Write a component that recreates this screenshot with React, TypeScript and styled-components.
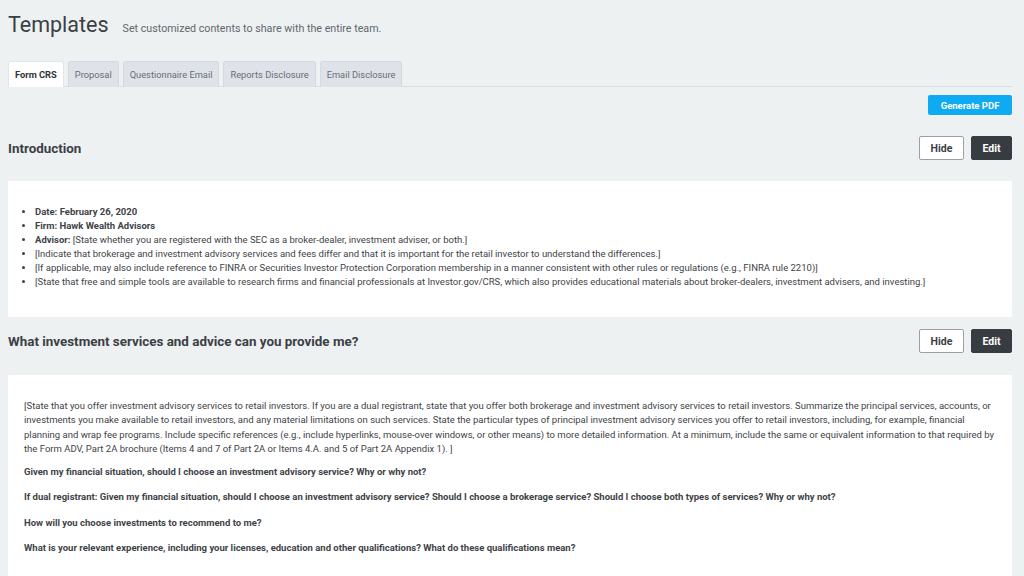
import React from "react";
import styled, { createGlobalStyle } from "styled-components";

const GlobalStyle = createGlobalStyle`
  html, body {
    margin: 0;
    padding: 0;
    background: #eef1f2;
    font-family: Roboto, "Liberation Sans", Arial, sans-serif;
    color: #3b4046;
  }
  * { box-sizing: border-box; }
`;

const Page = styled.div`
  width: 1024px;
  height: 576px;
  overflow: hidden;
  padding: 0 12px 0 8px;
`;

const Header = styled.div`
  display: flex;
  align-items: baseline;
  gap: 14px;
  padding-top: 12px;
  height: 42px;
`;

const Title = styled.h1`
  margin: 0;
  font-size: 21.5px;
  font-weight: 400;
  color: #3a3f44;
`;

const Subtitle = styled.span`
  font-size: 10.7px;
  color: #61676c;
`;

const TabBar = styled.div`
  display: flex;
  gap: 4px;
  margin-top: 19px;
  border-bottom: 1px solid #d9dee2;
  width: 1004px;
`;

const Tab = styled.div<{ $active?: boolean }>`
  height: 26px;
  padding: 0 6px;
  display: flex;
  align-items: center;
  font-size: 9.3px;
  border: 1px solid ${(p) => (p.$active ? "#e2e6e9" : "#d4d9df")};
  border-bottom: none;
  border-radius: 3px 3px 0 0;
  background: ${(p) => (p.$active ? "#ffffff" : "#dfe3e9")};
  color: ${(p) => (p.$active ? "#2f3438" : "#666d73")};
  font-weight: ${(p) => (p.$active ? 700 : 400)};
  margin-bottom: -1px;
`;

const Toolbar = styled.div`
  display: flex;
  justify-content: flex-end;
  margin-top: 8px;
`;

const PrimaryButton = styled.button`
  height: 20px;
  width: 84px;
  border: none;
  border-radius: 2px;
  background: #0eaaf2;
  color: #ffffff;
  font-family: inherit;
  font-size: 9.5px;
  font-weight: 700;
`;

const SectionHeader = styled.div<{ $top: number }>`
  display: flex;
  align-items: center;
  justify-content: space-between;
  margin-top: ${(p) => p.$top}px;
  height: 24px;
`;

const SectionTitle = styled.h2`
  margin: 0;
  font-size: 13.4px;
  font-weight: 700;
  color: #3b4045;
`;

const Actions = styled.div`
  display: flex;
  gap: 7px;
`;

const ActionButton = styled.button<{ $dark?: boolean }>`
  height: 24px;
  width: ${(p) => (p.$dark ? "41px" : "45px")};
  border-radius: 2px;
  font-family: inherit;
  font-size: 10.5px;
  font-weight: 700;
  border: 1px solid ${(p) => (p.$dark ? "#363c40" : "#9aa0a5")};
  background: ${(p) => (p.$dark ? "#363c40" : "#ffffff")};
  color: ${(p) => (p.$dark ? "#ffffff" : "#3b4045")};
`;

const Card = styled.div<{ $top: number; $height?: number }>`
  margin-top: ${(p) => p.$top}px;
  background: #ffffff;
  border-radius: 1px;
  padding: 24px 16px 0 16px;
  height: ${(p) => (p.$height ? `${p.$height}px` : "auto")};
  font-size: 9.5px;
  color: #3e4348;
`;

const List = styled.ul`
  margin: 0;
  padding-left: 11px;
  line-height: 14px;
`;

const Item = styled.li``;

const Paragraph = styled.p<{ $bold?: boolean; $gap?: number }>`
  margin: 0 0 ${(p) => p.$gap ?? 11}px;
  line-height: 14.3px;
  font-weight: ${(p) => (p.$bold ? 700 : 400)};
`;

export default function App() {
  const tabs = ["Form CRS", "Proposal", "Questionnaire Email", "Reports Disclosure", "Email Disclosure"];
  return (
    <Page>
      <GlobalStyle />
      <Header>
        <Title>Templates</Title>
        <Subtitle>Set customized contents to share with the entire team.</Subtitle>
      </Header>
      <TabBar>
        {tabs.map((t, i) => (
          <Tab key={t} $active={i === 0}>
            {t}
          </Tab>
        ))}
      </TabBar>
      <Toolbar>
        <PrimaryButton>Generate PDF</PrimaryButton>
      </Toolbar>

      <SectionHeader $top={21}>
        <SectionTitle>Introduction</SectionTitle>
        <Actions>
          <ActionButton>Hide</ActionButton>
          <ActionButton $dark>Edit</ActionButton>
        </Actions>
      </SectionHeader>
      <Card $top={21} $height={136}>
        <List>
          <Item><b>Date: February 26, 2020</b></Item>
          <Item><b>Firm: Hawk Wealth Advisors</b></Item>
          <Item>
            <b>Advisor:</b> [State whether you are registered with the SEC as a broker-dealer, investment adviser, or both.]
          </Item>
          <Item>
            [Indicate that brokerage and investment advisory services and fees differ and that it is important for the retail investor to understand the differences.]
          </Item>
          <Item>
            [If applicable, may also include reference to FINRA or Securities Investor Protection Corporation membership in a manner consistent with other rules or regulations (e.g., FINRA rule 2210)]
          </Item>
          <Item>
            [State that free and simple tools are available to research firms and financial professionals at Investor.gov/CRS, which also provides educational materials about broker-dealers, investment advisers, and investing.]
          </Item>
        </List>
      </Card>

      <SectionHeader $top={12}>
        <SectionTitle>What investment services and advice can you provide me?</SectionTitle>
        <Actions>
          <ActionButton>Hide</ActionButton>
          <ActionButton $dark>Edit</ActionButton>
        </Actions>
      </SectionHeader>
      <Card $top={22} $height={220}>
        <Paragraph $gap={9}>
          [State that you offer investment advisory services to retail investors. If you are a dual registrant, state that you offer both brokerage and investment advisory services to retail investors. Summarize the principal services, accounts, or investments you make available to retail investors, and any material limitations on such services. State the particular types of principal investment advisory services you offer to retail investors, including, for example, financial planning and wrap fee programs. Include specific references (e.g., include hyperlinks, mouse-over windows, or other means) to more detailed information. At a minimum, include the same or equivalent information to that required by the Form ADV, Part 2A brochure (Items 4 and 7 of Part 2A or Items 4.A. and 5 of Part 2A Appendix 1). ]
        </Paragraph>
        <Paragraph $bold>Given my financial situation, should I choose an investment advisory service? Why or why not?</Paragraph>
        <Paragraph $bold>
          If dual registrant: Given my financial situation, should I choose an investment advisory service? Should I choose a brokerage service? Should I choose both types of services? Why or why not?
        </Paragraph>
        <Paragraph $bold>How will you choose investments to recommend to me?</Paragraph>
        <Paragraph $bold>
          What is your relevant experience, including your licenses, education and other qualifications? What do these qualifications mean?
        </Paragraph>
      </Card>
    </Page>
  );
}
